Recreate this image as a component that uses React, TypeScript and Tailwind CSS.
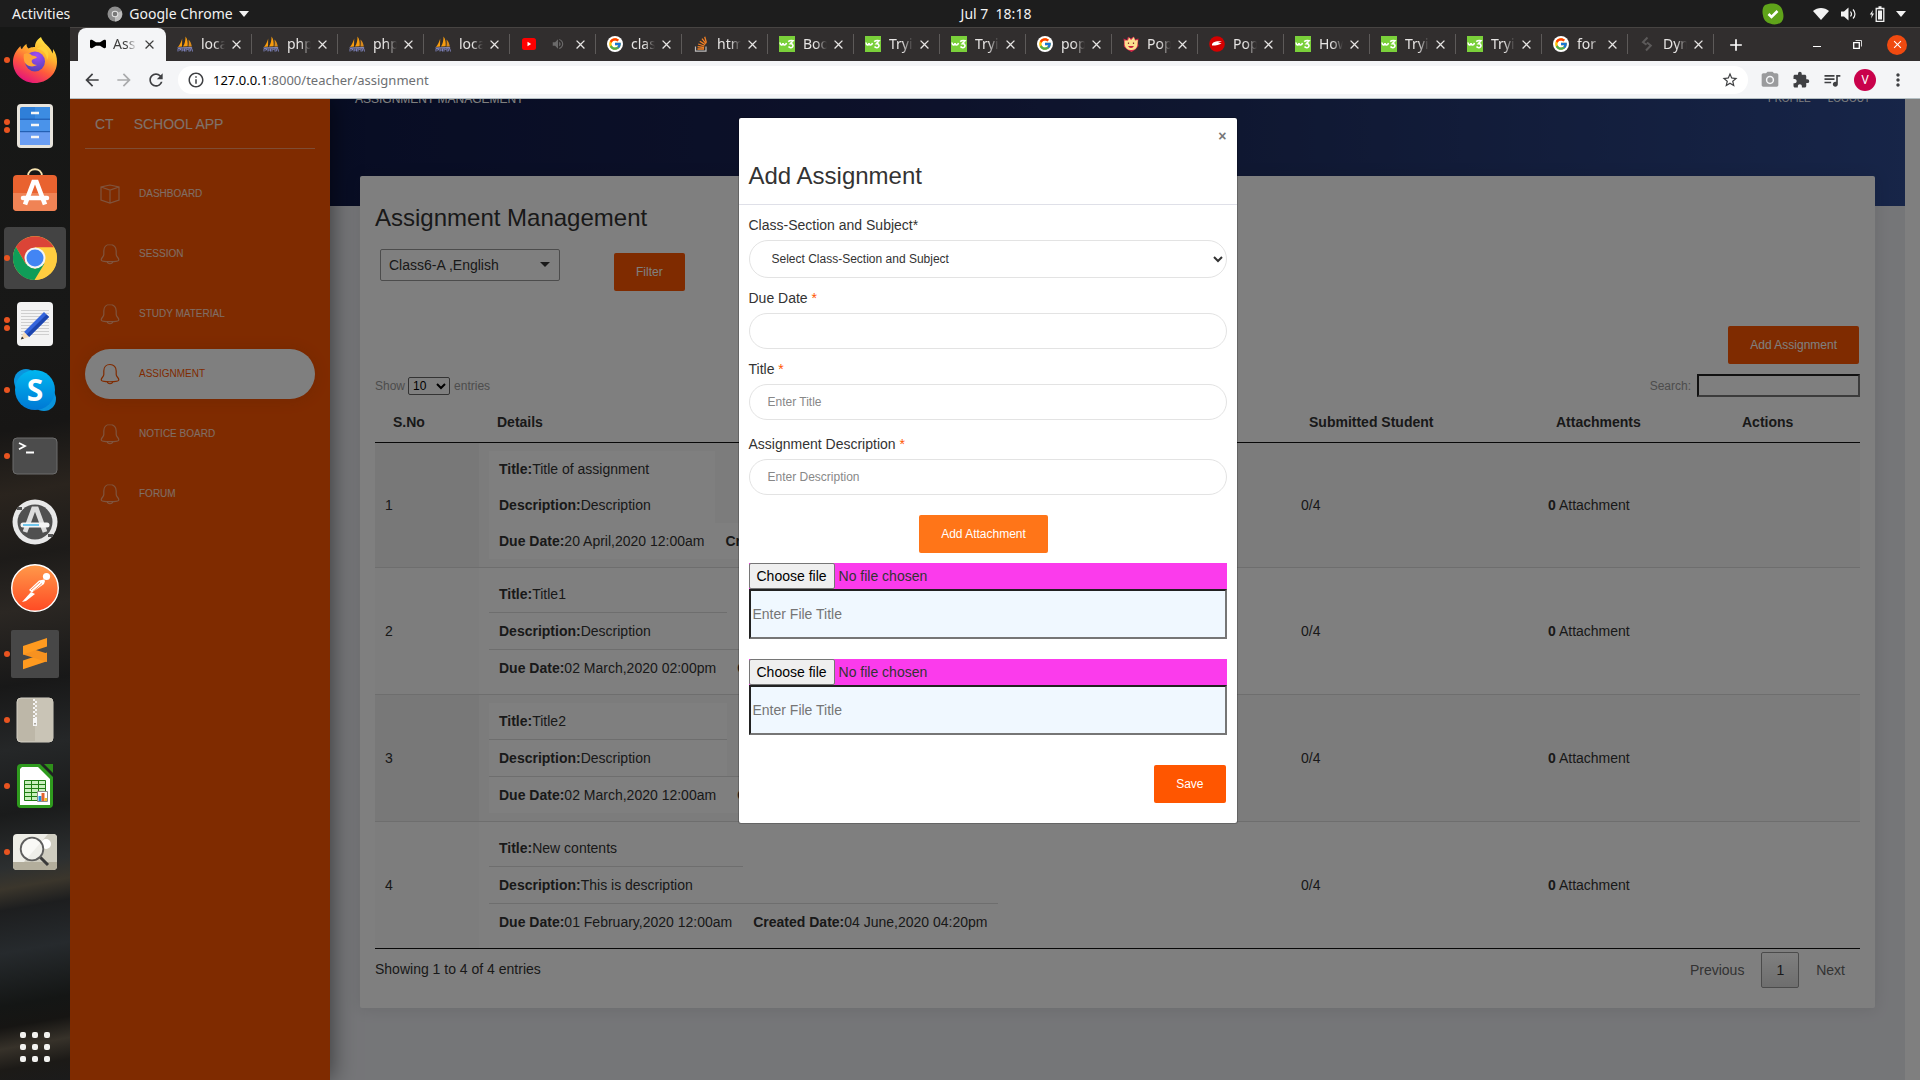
import type { ReactNode } from "react";
import { FcGoogle } from "react-icons/fc";
import {
  MdArrowBack,
  MdArrowForward,
  MdRefresh,
  MdInfoOutline,
  MdStarBorder,
  MdCameraAlt,
  MdExtension,
  MdQueueMusic,
  MdMoreVert,
  MdVolumeUp,
  MdClose,
  MdAdd,
} from "react-icons/md";

/* ---------- Favicons ---------- */

const BowTie = () => (
  <svg viewBox="0 0 16 16" className="size-4">
    <path d="M0 5.200C0 3.600 1.400 3.600 2.400 4.100L6 6.200h4l3.600-2.100c1-.5 2.400-.5 2.400 1.100v5.600c0 1.600-1.400 1.600-2.400 1.100L10 9.800H6l-3.600 2.100C1.400 12.400 0 12.400 0 10.800z" fill="#000" />
  </svg>
);

const Sails = () => (
  <svg viewBox="0 0 16 16" className="size-4">
    <path d="M5.200 2.500 5 10.500 1 11C2.800 9 4.200 6 5.200 2.500z" fill="#f89c0e" />
    <path d="M8.500.5C10.500 3 11 7 10.600 10.300L6 10.600C7.800 8 8.600 4 8.500.5z" fill="#f89c0e" />
    <path d="M11.500 3.500c2 2 3 4.500 3.300 7l-3.400.1c.4-2 .4-4.500.1-7.100z" fill="#d98a1c" />
    <path d="M0 11.600 15.500 11l-1.500 1.600H1.500z" fill="#8c8fc0" />
    <path d="M1 15.500v-3h2.500v1.500H2m3-1.500v3m0-1.500h2.500m0-1.500v3m1.500 0v-3l1.500 1.500 1.500-1.500v3m1 0 1-3h.8l.7 3" stroke="#7d80b8" strokeWidth="1" fill="none" />
  </svg>
);

const YouTube = () => (
  <svg viewBox="0 0 16 16" className="size-4">
    <rect x="1" y="2" width="14" height="12" rx="2.500" fill="#f00" />
    <path d="M6.500 5.800v4.400L10.200 8z" fill="#fff" />
  </svg>
);

const GoogleG = () => (
  <span className="flex size-4 items-center justify-center rounded-full bg-white">
    <FcGoogle className="size-[14px]" />
  </span>
);

const StackOverflow = () => (
  <svg viewBox="0 0 16 16" className="size-4" fill="none">
    <path d="M2.500 10.500v4.700h10.500v-4.700" stroke="#bcbbbb" strokeWidth="1.200" />
    <path d="M4.500 13h6.500M4.600 10.700l6.500.8M5.200 8l6.200 2M6.800 5.200l5.400 3.400M9 2.700l4 5M11.700.8l1.700 6" stroke="#f48024" strokeWidth="1.300" />
  </svg>
);

const W3 = () => (
  <svg viewBox="0 0 16 16" className="size-4">
    <rect width="16" height="16" fill="#7ad03a" />
    <path d="M1 6.500c.3 3 2.600 3.200 3 .6C4.400 9.700 7 9.500 7.400 6.800M9.200 5.700C10.500 4.500 12.800 4.500 14 4.700L11.500 7.600c3-.3 3.400 3.800.6 4.100-1.200.2-2-.3-2.600-1.100" stroke="#fff" strokeWidth="1.600" fill="none" />
  </svg>
);

const Mascot = () => (
  <svg viewBox="0 0 16 16" className="size-4">
    <path d="M1 6 .5 2.500 4 4 5 .8 8 2.500 10.500.5 12 3.500l3.500-1L15 7l.5 3-3 3.500L8.500 16 4 13.500.8 10.500z" fill="#d42a4a" />
    <path d="M1.500 4.500 5 4.500 6 1.500 8 4l3-3 1 3.500 2.800-.5-.5 5.500A6 6 0 0 1 8 14a6 6 0 0 1-6.300-5z" fill="#fbe08e" />
    <path d="M5.500 6.500v1.500m5-1.500v1.500" stroke="#8c2b2b" strokeWidth="1.200" />
    <path d="M5.200 10h5.600c-.6 2.600-5 2.600-5.600 0z" fill="#c8203c" />
  </svg>
);

const RedBadge = () => (
  <svg viewBox="0 0 16 16" className="size-4">
    <circle cx="8" cy="8" r="7.800" fill="#d40000" />
    <path d="M3 8c2-3 7-2.800 10-2.500-2 .3-3 1-4 1.200 1.500.2 2.500.3 3.500.5C9.500 9.500 5 9.500 3 9.500z" fill="#fff" />
  </svg>
);

const DarkS = () => (
  <svg viewBox="0 0 16 16" className="size-4" fill="none">
    <path d="M8.500 1.500 4 6.200l3.500 2.600M8 6.500l3.800 3L7 14.500" stroke="#5c5a5a" strokeWidth="2" />
  </svg>
);

/* ---------- Desktop top bar ---------- */

function TopBar() {
  return (
    <header className="relative flex h-[27px] shrink-0 items-center justify-between bg-[#1d1d1d] pl-3 pr-[14px] font-['Noto_Sans',sans-serif] text-sm text-[#f2f2f2]">
      <div className="flex items-center">
        <button type="button">Activities</button>
        <button type="button" className="ml-[37px] flex items-center gap-[6px]">
          <svg viewBox="0 0 16 16" className="size-4">
            <circle cx="8" cy="8" r="7.500" fill="#8e8e8e" />
            <path d="M8 8 14.500 5A7.500 7.500 0 0 1 8 15.500z" fill="#bdbdbd" />
            <circle cx="8" cy="8" r="3.300" fill="#e4e4e4" />
            <circle cx="8" cy="8" r="2.300" fill="#777" />
          </svg>
          Google Chrome
          <svg viewBox="0 0 10 6" className="h-[6px] w-[10px]"><path d="M0 0h10L5 6z" fill="#f2f2f2" /></svg>
        </button>
      </div>
      <div className="absolute inset-x-0 flex justify-center pl-[72px]">
        <span className="whitespace-pre">Jul 7  18:18</span>
      </div>
      <div className="relative flex items-center">
        <svg viewBox="0 0 22 22" className="size-[22px]">
          <path d="M3 2C6 .5 12-.3 15.500 1.500c3 1.200 5 4 5.500 8 .8 3 .8 7-1.500 9.500-3 2.800-8 3-11.500 1.500-4-1-6.500-4-7-8C0 9 .3 4 3 2z" fill="#5fa31a" />
          <path d="m6.500 11 3 3 6-6" stroke="#fff" strokeWidth="2.600" fill="none" />
        </svg>
        <svg viewBox="0 0 16 12" className="ml-[29px] h-3 w-4"><path d="M0 3c4.500-4 11.500-4 16 0L8 12z" fill="#f2f2f2" /></svg>
        <svg viewBox="0 0 16 14" className="ml-3 h-[14px] w-4">
          <path d="M0 4.500h3L7.500.5v13L3 9.500H0z" fill="#f2f2f2" />
          <path d="M9.500 4.500c1.200 1.500 1.200 3.500 0 5M12 2.500c2.600 2.600 2.600 6.400 0 9" stroke="#f2f2f2" strokeWidth="1.200" fill="none" />
        </svg>
        <svg viewBox="0 0 16 16" className="ml-3 size-4">
          <path d="M4 4 .8 8.500h2L2 12.500 5 7.500H3.200z" fill="#f2f2f2" />
          <path d="M7.200 2.500h7.600v12.800H7.200zM9.500 1h3" stroke="#f2f2f2" strokeWidth="1.300" fill="none" />
          <path d="M9 4.500h4v9H9z" fill="#f2f2f2" />
        </svg>
        <svg viewBox="0 0 10 6" className="ml-[11px] h-[6px] w-[10px]"><path d="M0 0h10L5 6z" fill="#f2f2f2" /></svg>
      </div>
    </header>
  );
}

/* ---------- Dock ---------- */

const Firefox = () => (
  <svg viewBox="0 0 46 46" className="size-[46px]">
    <defs>
      <linearGradient id="ffBody" x1="0.800" y1="0" x2="0.300" y2="1">
        <stop offset="0" stopColor="#fff14a" />
        <stop offset=".35" stopColor="#ffb52e" />
        <stop offset=".65" stopColor="#ff5a3c" />
        <stop offset="1" stopColor="#e3107e" />
      </linearGradient>
      <radialGradient id="ffGlobe" cx=".6" cy=".2" r=".9">
        <stop offset="0" stopColor="#a34cf5" />
        <stop offset="1" stopColor="#4a3fae" />
      </radialGradient>
    </defs>
    <path d="M29 0c-5 3-6 7-6 10-4 0-5 1-6.500 1.500-1.500-1-2-3-2-4.500-2 1-3.500 3-4.500 5C9 12 8.500 10 8.500 9 3 14 1 20 1 25c0 12 10 21 22 21s22-9 22-21c0-5-1-9-4-13 0 2 0 3-.5 4.500C39 11 34 8 32 5c-1.500-2-2.500-3-3-5z" fill="url(#ffBody)" />
    <circle cx="23" cy="24.500" r="10" fill="url(#ffGlobe)" />
    <path d="M12 17c3-1.500 6-.5 8 1.500 2.500 0 4.500 1 5 2-1.500 1-4 1.500-5 2.500-1 2 1 5 5 5-5 3-12 1-13-5-.3-2-.5-4 0-6z" fill="#ffa436" />
    <path d="M25 12c6 0 10 5 10 11 3-5 1-11-3-13-2-1-5 0-7 2z" fill="#ffd43a" opacity=".8" />
  </svg>
);

const Files = () => (
  <svg viewBox="0 0 38 46" className="h-[46px] w-[38px]">
    <rect x="1" y="1" width="36" height="44" rx="4" fill="#e8e4dc" />
    <rect x="4" y="4" width="30" height="38" rx="2" fill="#2f7fd8" />
    <path d="M19 4h15v12.500H19z" fill="#3c8ce2" />
    <path d="M4 16.500h30v12H4z" fill="#4a93ea" />
    <path d="M4 28.500h30V42H4z" fill="#6a9df2" />
    <path d="M4 16.200h30M4 28.700h30" stroke="#1b55a8" />
    <path d="M15 10h8m-8 12h8m-8 12h8" stroke="#f6f6f6" strokeWidth="2.500" />
  </svg>
);

const Software = () => (
  <svg viewBox="0 0 46 44" className="mb-1 h-[44px] w-[46px]">
    <path d="M16 8c0-9 14-9 14 0" stroke="#f7e3b0" strokeWidth="1.800" fill="none" />
    <rect x="1" y="7" width="44" height="36" rx="4" fill="#e9622f" />
    <path d="M1 25h44v14a4 4 0 0 1-4 4H5a4 4 0 0 1-4-4z" fill="#f08355" />
    <path d="M13 36.500 21.500 14h3L33 36.500" stroke="#fff" strokeWidth="4.600" fill="none" />
    <path d="M11 30h24" stroke="#fff" strokeWidth="4.500" strokeLinecap="round" />
  </svg>
);

const ChromeLogo = () => (
  <svg viewBox="0 0 46 46" className="size-[46px]">
    <circle cx="23" cy="23" r="22" fill="#ffcd40" />
    <path d="M23 23 13.500 28.500 3.900 12A22 22 0 0 1 42 12.500H23z" fill="#db4437" />
    <path d="M23 12.500h19.200A22 22 0 0 1 22.500 45L32.500 28.500z" fill="#ffcd40" />
    <path d="M3.900 12 13.500 28.500 23 34l9.500-5.500L22.500 45A22 22 0 0 1 3.900 12z" fill="#0f9d58" />
    <circle cx="23" cy="23" r="10.500" fill="#f4f4f4" />
    <circle cx="23" cy="23" r="8.500" fill="#4285f4" />
  </svg>
);

const TextEditor = () => (
  <svg viewBox="0 0 38 46" className="h-[46px] w-[38px]">
    <rect x="1" y="1" width="36" height="44" rx="4" fill="#f3f3f3" />
    <path d="M5 9.500h28M5 12.500h28M5 15.500h28M5 18.500h28M5 21.500h28M5 24.500h28M5 27.500h28M5 30.500h28M5 33.500h28" stroke="#cfcfcf" />
    <path d="m8 31 20-20 5 5-20 20z" fill="#3565dc" />
    <path d="m10.500 33.500 20-20 2.500 2.500-20 20z" fill="#1c45ae" />
    <path d="m8 31-3 7.500 8-2.500z" fill="#f7dcb8" />
    <path d="m6 35.500-1.200 3 3.200-1z" fill="#333" />
  </svg>
);

const Skype = () => (
  <span className="relative flex size-[42px] items-center justify-center">
    <svg viewBox="0 0 42 42" className="absolute inset-0 size-full">
      <defs>
        <linearGradient id="sk" x1="0" y1="0" x2="0" y2="1">
          <stop offset="0" stopColor="#00b7f0" />
          <stop offset="1" stopColor="#0078d4" />
        </linearGradient>
      </defs>
      <circle cx="12" cy="12" r="12" fill="#0a94dc" />
      <circle cx="30" cy="30" r="12" fill="#0a94dc" />
      <circle cx="21" cy="21" r="20" fill="url(#sk)" />
    </svg>
    <span className="relative font-['Open_Sans',sans-serif] text-[30px] font-bold leading-none text-white">S</span>
  </span>
);

const Terminal = () => (
  <svg viewBox="0 0 46 38" className="h-[38px] w-[46px]">
    <rect x="1" y="1" width="44" height="36" rx="4" fill="#4c4c4c" stroke="#6c6c6c" />
    <path d="m7 6 6 3-6 3.300M14 15.500h8" stroke="#fff" strokeWidth="1.800" fill="none" />
  </svg>
);

const Updater = () => (
  <svg viewBox="0 0 46 46" className="size-[46px]">
    <circle cx="23" cy="23" r="22.500" fill="#e8e8e8" />
    <circle cx="23" cy="23" r="17.500" fill="#505050" />
    <path d="M5 8h5v3H5zM36 35h5v3h-5z" fill="#555" />
    <path d="M13 33 21.500 10h3L33 33" stroke="#dcdcdc" strokeWidth="4.800" fill="none" />
    <path d="M11 26h24" stroke="#f4f4f4" strokeWidth="5" strokeLinecap="round" />
    <path d="M11 26h16" stroke="#19a9e8" strokeWidth="1.200" />
  </svg>
);

const Postman = () => (
  <svg viewBox="0 0 48 48" className="size-12">
    <defs>
      <linearGradient id="pm" x1="0" y1="0" x2="0" y2="1">
        <stop offset="0" stopColor="#ff9a4a" />
        <stop offset="1" stopColor="#ff4a24" />
      </linearGradient>
    </defs>
    <circle cx="24" cy="24" r="23.300" fill="url(#pm)" stroke="#fff" strokeWidth="1.400" />
    <circle cx="35.500" cy="12.500" r="3.600" fill="#fff" />
    <path d="m33 15.500-5 1-10 9.500 3 2.500L33 20l1-3z" fill="#fff" />
    <path d="M20 28 11 38l4-1 9-7z" fill="#fff" />
    <path d="m20 26 9-8m-7 9.500 9-8" stroke="#ff7a3a" strokeWidth=".8" />
  </svg>
);

const Sublime = () => (
  <svg viewBox="0 0 48 48" className="size-12">
    <rect width="48" height="48" rx="2" fill="#474747" />
    <path d="m12 30.500 24-8v8.700l-24 8z" fill="#ff9a1f" />
    <path d="M12 16v8.500l24 7.500v-8.500z" fill="#f79220" />
    <path d="m12 16 24-8v8.500l-24 8z" fill="#ff9a1f" />
  </svg>
);

const Archive = () => (
  <svg viewBox="0 0 38 46" className="h-[46px] w-[38px]">
    <rect x="1" y="1" width="36" height="44" rx="4" fill="#bdb7a8" stroke="#d5d1c6" />
    <path d="M19 1h14a4 4 0 0 1 4 4v36a4 4 0 0 1-4 4H19z" fill="#c9c4b6" />
    <path d="M18 2v20" stroke="#f4f4f4" strokeWidth="2" strokeDasharray="2 2" />
    <path d="M20 4v18" stroke="#f4f4f4" strokeWidth="2" strokeDasharray="2 2" />
    <path d="M17 21h4v8h-4z" fill="#f6f6f6" />
    <path d="M18.300 26h1.400v1.500h-1.400z" fill="#8a8578" />
  </svg>
);

const Calc = () => (
  <svg viewBox="0 0 38 46" className="h-[46px] w-[38px]">
    <path d="M5 1h19l13 13v27a4 4 0 0 1-4 4H5a4 4 0 0 1-4-4V5a4 4 0 0 1 4-4z" fill="#2f9b1e" />
    <path d="M28 1h9v9z" fill="#2f8f1a" />
    <path d="M6 4h16l12 12v26H4V6z" fill="#fff" />
    <path d="M8 17h22v21H8z" fill="#c9f0bd" />
    <path d="M8.500 17.500h21v20h-21zM8 21.500h22M8 25.500h22M8 29.500h22M8 33.500h22M15.500 17v21M22.500 17v21" stroke="#1f7d12" fill="none" />
    <path d="M21.500 28.500h10v10h-10z" fill="#fff" stroke="#8a8a8a" />
    <path d="M22.500 33h3v5h-3z" fill="#1e90e0" />
    <path d="M25.500 30h3v8h-3z" fill="#e2642c" />
    <path d="M28.500 35h2.500v3h-2.500z" fill="#f2bd1e" />
  </svg>
);

const ImageViewer = () => (
  <svg viewBox="0 0 46 38" className="h-[38px] w-[46px]">
    <rect x="1" y="1" width="44" height="36" rx="4" fill="#edede6" />
    <path d="M12 29 36 1h5a4 4 0 0 1 4 4v24z" fill="#cfcdc0" />
    <path d="M1 29h44v4a4 4 0 0 1-4 4H5a4 4 0 0 1-4-4z" fill="#b3ae9c" />
    <circle cx="34" cy="11" r="5" fill="#fff" />
    <circle cx="20" cy="16" r="11.300" fill="#fff" fillOpacity=".65" stroke="#5e5e5e" strokeWidth="1.800" />
    <path d="m28.500 24.500 7.500 7.500" stroke="#3a3a3a" strokeWidth="3" />
  </svg>
);

const dock: { name: string; icon: ReactNode; dots: number; active?: boolean }[] = [
  { name: "Firefox", icon: <Firefox />, dots: 1 },
  { name: "Files", icon: <Files />, dots: 2 },
  { name: "Software", icon: <Software />, dots: 0 },
  { name: "Google Chrome", icon: <ChromeLogo />, dots: 1, active: true },
  { name: "Text Editor", icon: <TextEditor />, dots: 2 },
  { name: "Skype", icon: <Skype />, dots: 1 },
  { name: "Terminal", icon: <Terminal />, dots: 1 },
  { name: "Software Updater", icon: <Updater />, dots: 0 },
  { name: "Postman", icon: <Postman />, dots: 0 },
  { name: "Sublime Text", icon: <Sublime />, dots: 1 },
  { name: "Archive Manager", icon: <Archive />, dots: 1 },
  { name: "Calc", icon: <Calc />, dots: 1 },
  { name: "Image Viewer", icon: <ImageViewer />, dots: 1 },
];

function Dock() {
  return (
    <nav
      aria-label="Dock"
      className="flex w-[70px] shrink-0 flex-col justify-between bg-[linear-gradient(170deg,#161716_0%,#181817_30%,#171615_38%,#2a241e_44%,#1d1b19_50%,#2b2723_55%,#181818_62%,#252728_68%,#1a1b1b_74%,#2c2f30_79%,#3b362c_81%,#1d1e1f_83%,#262a2d_87%,#141615_92%,#161513_94%,#37322a_96%,#1c1a17_98%,#1b1b1b_100%)]"
    >
      <ul>
        {dock.map((d) => (
          <li key={d.name} className="relative flex h-[66px] items-center justify-center">
            {d.dots > 0 && (
              <span className="absolute left-1 flex flex-col gap-[2px]">
                <span className="size-[6px] rounded-full bg-[#e95420]" />
                {d.dots > 1 && <span className="size-[6px] rounded-full bg-[#e95420]" />}
              </span>
            )}
            <button
              type="button"
              aria-label={d.name}
              className={
                d.active
                  ? "flex size-[62px] items-center justify-center rounded-[4px] bg-[#434343]"
                  : "flex size-[62px] items-center justify-center"
              }
            >
              {d.icon}
            </button>
          </li>
        ))}
      </ul>
      <button type="button" aria-label="Show Applications" className="mb-[18px] grid grid-cols-3 gap-[6px] self-center">
        {[0, 1, 2, 3, 4, 5, 6, 7, 8].map((i) => (
          <span key={i} className="size-[6px] rounded-[2px] bg-[#f2f2f0]" />
        ))}
      </button>
    </nav>
  );
}

/* ---------- Browser chrome ---------- */

const tabs: { icon: ReactNode; text: string; audio?: boolean }[] = [
  { icon: <Sails />, text: "loca" },
  { icon: <Sails />, text: "php" },
  { icon: <Sails />, text: "php" },
  { icon: <Sails />, text: "loca" },
  { icon: <YouTube />, text: "", audio: true },
  { icon: <GoogleG />, text: "clas" },
  { icon: <StackOverflow />, text: "htm" },
  { icon: <W3 />, text: "Boo" },
  { icon: <W3 />, text: "Tryi" },
  { icon: <W3 />, text: "Tryi" },
  { icon: <GoogleG />, text: "pop" },
  { icon: <Mascot />, text: "Pop" },
  { icon: <RedBadge />, text: "Pop" },
  { icon: <W3 />, text: "How" },
  { icon: <W3 />, text: "Tryi" },
  { icon: <W3 />, text: "Tryi" },
  { icon: <GoogleG />, text: "for" },
  { icon: <DarkS />, text: "Dyn" },
];

const fade = "w-[24px] overflow-hidden whitespace-nowrap [mask-image:linear-gradient(to_right,#000_55%,transparent)]";

function TabStrip() {
  return (
    <div className="flex h-[34px] items-stretch border-t border-[#474442] bg-[#312e2e] pl-2 font-['Noto_Sans',sans-serif] text-sm">
      <div className="flex w-[88px] shrink-0 items-center rounded-t-lg bg-[#f4f5f7] pb-px pl-3 text-[#3f3f3f]">
        <BowTie />
        <span className={`${fade} ml-[7px]`}>Ass</span>
        <button type="button" aria-label="Close tab" className="ml-[5px]"><MdClose className="size-[15px]" /></button>
      </div>
      {tabs.map((t, i) => (
        <div key={i} className="flex w-[86px] shrink-0 items-center pb-px pl-[11px] text-[#e6e4e3]">
          {t.icon}
          {t.audio ? (
            <span className="ml-[14px] flex w-[18px] text-[#6b6a6a]"><MdVolumeUp className="size-[14px]" /></span>
          ) : (
            <span className={`${fade} ml-2`}>{t.text}</span>
          )}
          <button type="button" aria-label="Close tab" className="ml-[4px]"><MdClose className="size-[15px]" /></button>
          <span className="ml-auto h-5 w-px bg-[#5d5a59]" />
        </div>
      ))}
      <button type="button" aria-label="New tab" className="ml-3 text-white"><MdAdd className="size-5" /></button>
      <div className="ml-auto flex items-center pr-[13px] text-white">
        <button type="button" aria-label="Minimize" className="mr-8 mt-1 h-px w-2 bg-white" />
        <button type="button" aria-label="Restore" className="mr-[25px]">
          <svg viewBox="0 0 9 9" className="size-[9px]" fill="none" stroke="#fff">
            <path d="M.7 2.700h5.600v5.600H.7z" strokeWidth="1.300" />
            <path d="M2.500.5h6v6" strokeWidth=".8" />
          </svg>
        </button>
        <button type="button" aria-label="Close window" className="flex size-5 items-center justify-center rounded-full bg-[#f04a10]">
          <MdClose className="size-[13px]" />
        </button>
      </div>
    </div>
  );
}

function Toolbar() {
  return (
    <div className="flex h-[38px] items-center gap-3 border-b border-[#b4bfc3] bg-[#f4f5f7] pl-3 pr-3 text-[#3f4043]">
      <button type="button" aria-label="Back"><MdArrowBack className="size-5" /></button>
      <button type="button" aria-label="Forward" className="text-[#a9aaac]"><MdArrowForward className="size-5" /></button>
      <button type="button" aria-label="Reload"><MdRefresh className="size-5" /></button>
      <div className="flex h-7 flex-1 items-center rounded-full bg-white px-[9px]">
        <MdInfoOutline className="size-[18px]" />
        <p className="ml-2 font-['Noto_Sans',sans-serif] text-[13px] leading-5 text-[#6d6f72]">
          <span className="text-black">127.0.0.1</span>:8000/teacher/assignment
        </p>
        <button type="button" aria-label="Bookmark" className="ml-auto"><MdStarBorder className="size-[18px]" /></button>
      </div>
      <button type="button" aria-label="Screenshot" className="text-[#9a9b9d]"><MdCameraAlt className="size-5" /></button>
      <button type="button" aria-label="Extensions"><MdExtension className="size-[18px]" /></button>
      <button type="button" aria-label="Media"><MdQueueMusic className="size-5" /></button>
      <button type="button" className="flex size-[22px] items-center justify-center rounded-full bg-[#c9024b] font-['Noto_Sans',sans-serif] text-xs text-white">V</button>
      <button type="button" aria-label="Menu"><MdMoreVert className="size-5" /></button>
    </div>
  );
}

/* ---------- School app ---------- */

const Bell = () => (
  <svg viewBox="0 0 20 22" className="h-[22px] w-5" fill="none" stroke="currentColor" strokeWidth="1.200">
    <path d="M10 1.500c-4 0-6.200 3-6.200 6.500v3.500c0 2.500-2.600 3-2.600 5.500 0 2.300 17.600 2.300 17.600 0 0-2.500-2.600-3-2.600-5.500V8c0-3.500-2.200-6.500-6.200-6.500z" />
    <path d="M7.300 18.800c.3 2.600 5.100 2.600 5.400 0" />
  </svg>
);

const Box = () => (
  <svg viewBox="0 0 20 22" className="h-[22px] w-5" fill="none" stroke="currentColor" strokeWidth="1.200">
    <path d="M10 2 1 4v13l9 3 9-3V4zM1 4l9 3 9-3M10 7v13" />
  </svg>
);

const menu = ["DASHBOARD", "SESSION", "STUDY MATERIAL", "ASSIGNMENT", "NOTICE BOARD", "FORUM"];

function Sidebar() {
  return (
    <aside className="relative z-10 w-[260px] shrink-0 bg-[#ff5600] px-[15px] text-white shadow-[2px_0_22px_rgba(0,0,0,0.5)]">
      <div className="flex h-[50px] items-center gap-5 border-b border-white/40 pl-[10px] text-sm text-white/85">
        <a href="#ct">CT</a>
        <a href="#home">SCHOOL APP</a>
      </div>
      <ul className="mt-5 flex flex-col gap-[10px] text-[10px]">
        {menu.map((m) => (
          <li key={m}>
            <a
              href="#menu"
              className={
                m === "ASSIGNMENT"
                  ? "flex h-[50px] items-center gap-[19px] rounded-full bg-white pl-[15px] text-[#ff5600] shadow-[0_1px_15px_1px_rgba(39,39,39,0.1)]"
                  : "flex h-[50px] items-center gap-[19px] pl-[15px] text-white/80"
              }
            >
              <span className={m === "ASSIGNMENT" ? "" : "opacity-60"}>{m === "DASHBOARD" ? <Box /> : <Bell />}</span>
              {m}
            </a>
          </li>
        ))}
      </ul>
    </aside>
  );
}

const rows = [
  { title: "Title of assignment", desc: "Description", due: "20 April,2020 12:00am", created: "20 April,2020 11:05am" },
  { title: "Title1", desc: "Description", due: "02 March,2020 02:00pm", created: "02 March,2020 01:12pm" },
  { title: "Title2", desc: "Description", due: "02 March,2020 12:00am", created: "02 March,2020 01:20pm" },
  { title: "New contents", desc: "This is description", due: "01 February,2020 12:00am", created: "04 June,2020 04:20pm" },
];

function Details({ row, lined, shaded }: { row: (typeof rows)[number]; lined: boolean; shaded: boolean }) {
  const line = lined ? "border-t border-[#dddddd]" : "";
  const cell = shaded ? "bg-white py-2 pl-[10px] pr-[11px]" : "py-2 pl-[10px] pr-[11px]";
  return (
    <table className="border-separate border-spacing-0 whitespace-nowrap">
      <tbody>
        <tr>
          <td className={cell}><b>Title:</b>{row.title}</td>
        </tr>
        <tr>
          <td className={`${cell} ${line}`}><b>Description:</b>{row.desc}</td>
        </tr>
        <tr>
          <td className={`${cell} ${line}`}><b>Due Date:</b>{row.due}</td>
          <td className={`${cell} ${line}`}><b>Created Date:</b>{row.created}</td>
        </tr>
      </tbody>
    </table>
  );
}

function AssignmentTable() {
  return (
    <table className="mt-[5px] w-full table-fixed border-separate border-spacing-0 text-left">
      <colgroup>
        <col className="w-[104px]" />
        <col />
        <col className="w-[247px]" />
        <col className="w-[186px]" />
        <col className="w-[136px]" />
      </colgroup>
      <thead>
        <tr>
          {["S.No", "Details", "Submitted Student", "Attachments", "Actions"].map((h) => (
            <th key={h} className="border-b border-[#111111] px-[18px] py-[10px] font-bold">{h}</th>
          ))}
        </tr>
      </thead>
      <tbody>
        {rows.map((r, i) => {
          const odd = i % 2 === 0;
          const edge = i === rows.length - 1 ? "border-b border-[#111111]" : "border-b border-[#dddddd]";
          const cell = `px-[10px] py-2 ${edge}`;
          return (
            <tr key={r.title} className={odd ? "bg-[#f9f9f9]" : "bg-white"}>
              <td className={`${cell} ${odd ? "bg-[#f1f1f1]" : "bg-[#fafafa]"}`}>{i + 1}</td>
              <td className={cell}><Details row={r} lined={i > 0} shaded={odd} /></td>
              <td className={cell}>0/4</td>
              <td className={cell}><b>0</b> Attachment</td>
              <td className={cell} />
            </tr>
          );
        })}
      </tbody>
    </table>
  );
}

const orangeBtn = "h-[38px] rounded-[2px] px-[22px] text-xs text-white";

function Content() {
  return (
    <main className="min-w-0 flex-1 bg-[#ebecf1]">
      <div className="h-[107px] bg-[linear-gradient(90deg,#101a48_0%,#1a2354_35%,#1e2d60_55%,#2e4a90_100%)] px-[25px] text-white">
        <div className="flex h-0 items-center justify-between whitespace-nowrap">
          <a href="#top" className="text-xs">ASSIGNMENT MANAGEMENT</a>
          <div className="flex gap-[17px] pr-[10px] text-[10px]">
            <a href="#profile">PROFILE</a>
            <a href="#logout">LOGOUT</a>
          </div>
        </div>
      </div>
      <section className="relative mx-[30px] -mt-[30px] rounded-[2px] bg-white px-[15px] pb-5 pt-[26px] text-[#333333] shadow-[0_1px_15px_1px_rgba(39,39,39,0.1)]">
        <h2 className="text-2xl leading-8">Assignment Management</h2>
        <div className="ml-[5px] mt-[15px] flex items-start gap-[54px]">
          <div className="relative w-[180px]">
            <select aria-label="Class" className="h-8 w-full appearance-none rounded-[2px] border border-[#999999] bg-white pl-2 text-sm">
              <option>Class6-A ,English</option>
            </select>
            <svg viewBox="0 0 10 5" className="pointer-events-none absolute right-[10px] top-[13px] h-[5px] w-[10px]"><path d="M0 0h10L5 5z" fill="#333" /></svg>
          </div>
          <button type="button" className={`${orangeBtn} mt-1 bg-[#ff5600]`}>Filter</button>
        </div>
        <div className="mt-[35px] flex justify-end pr-px">
          <button type="button" className={`${orangeBtn} bg-[#ff5600]`}>Add Assignment</button>
        </div>
        <div className="mt-[10px] flex h-[23px] items-center justify-between text-xs text-[#9a9a9a]">
          <label className="flex items-center gap-[3px]">
            Show
            <select className="h-[18px] w-[42px] rounded-[2px] border border-[#666666] text-xs text-black">
              <option>10</option>
            </select>
            <span className="ml-px">entries</span>
          </label>
          <label className="flex items-center gap-[6px]">
            Search:
            <input type="search" className="h-[23px] w-[163px] border-2 border-b-[#767676] border-l-[#222222] border-r-[#767676] border-t-[#222222] bg-white px-1" />
          </label>
        </div>
        <AssignmentTable />
        <div className="mt-[3px] flex items-center justify-between">
          <p className="pb-[2px]">Showing 1 to 4 of 4 entries</p>
          <div className="flex gap-[2px] text-[#666666]">
            <button type="button" className="h-9 px-[15px]">Previous</button>
            <button type="button" className="h-9 rounded-[2px] border border-[#979797] bg-linear-to-b from-white to-[#dcdcdc] px-[14px] text-[#333333]">1</button>
            <button type="button" className="h-9 px-[15px]">Next</button>
          </div>
        </div>
      </section>
    </main>
  );
}

/* ---------- Add Assignment dialog ---------- */

const pill = "h-9 w-full rounded-full border border-[#e3e3e3] px-[18px] text-xs placeholder:text-[#888888]";

function Field({ id, label, placeholder, gap }: { id: string; label: string; placeholder?: string; gap: string }) {
  return (
    <div className={`flex flex-col gap-[5px] ${gap}`}>
      <label htmlFor={id}>
        {label} <span className="text-[#ff5600]">*</span>
      </label>
      <input id={id} type="text" placeholder={placeholder} className={pill} />
    </div>
  );
}

function Attachment({ id, gap }: { id: string; gap: string }) {
  return (
    <div className={gap}>
      <label htmlFor={id} className="flex h-[26px] items-center gap-1 bg-[#fb3bec]">
        <span className="flex h-[26px] items-center rounded-[2px] border border-[#767676] bg-[#efefef] px-[7px] text-black">Choose file</span>
        <span>No file chosen</span>
        <input id={id} type="file" className="sr-only" />
      </label>
      <input
        type="text"
        aria-label="File title"
        placeholder="Enter File Title"
        className="block h-[50px] w-full border-2 border-b-[#767676] border-l-[#222222] border-r-[#767676] border-t-[#222222] bg-[#f0f8ff] px-[2px] placeholder:text-[#757575]"
      />
    </div>
  );
}

function Dialog() {
  return (
    <div className="absolute inset-0 z-20 flex items-start justify-center bg-black/50 pr-[15px] pt-[18px]">
      <div role="dialog" aria-labelledby="dialog-title" className="w-[500px] rounded-[3px] border border-black/20 bg-white bg-clip-padding text-[#333333]">
        <div className="flex flex-col border-b border-[#dfe0e8] px-[10px] pb-3 pt-2">
          <button type="button" aria-label="Close" className="self-end text-sm font-bold text-[#777777]">×</button>
          <h2 id="dialog-title" className="mt-[14px] text-2xl leading-8">Add Assignment</h2>
        </div>
        <form className="flex flex-col px-[10px] pb-5 pt-[10px]">
          <div className="flex flex-col gap-[5px]">
            <label htmlFor="class-subject">Class-Section and Subject*</label>
            <select id="class-subject" className="h-[38px] w-full rounded-full border border-[#e3e3e3] bg-white pl-[18px] text-xs">
              <option>Select Class-Section and Subject</option>
            </select>
          </div>
          <Field id="due" label="Due Date" gap="mt-[10px]" />
          <Field id="title" label="Title" placeholder="Enter Title" gap="mt-[10px]" />
          <Field id="desc" label="Assignment Description" placeholder="Enter Description" gap="mt-[14px]" />
          <div className="mt-5 flex justify-center pr-2">
            <button type="button" className={`${orangeBtn} bg-[#ff7518]`}>Add Attachment</button>
          </div>
          <Attachment id="file-1" gap="mt-[10px]" />
          <Attachment id="file-2" gap="mt-5" />
          <div className="mt-[30px] flex justify-end pr-px">
            <button type="button" className={`${orangeBtn} bg-[#ff5600]`}>Save</button>
          </div>
        </form>
      </div>
    </div>
  );
}

export default function App() {
  return (
    <div className="flex h-screen flex-col overflow-hidden">
      <TopBar />
      <div className="flex min-h-0 flex-1">
        <Dock />
        <div className="flex min-w-0 flex-1 flex-col">
          <TabStrip />
          <Toolbar />
          <div className="relative flex min-h-0 flex-1 overflow-hidden bg-white pr-[15px] font-['Liberation_Sans',Arial,sans-serif] text-sm">
            <Sidebar />
            <Content />
            <Dialog />
          </div>
        </div>
      </div>
    </div>
  );
}
